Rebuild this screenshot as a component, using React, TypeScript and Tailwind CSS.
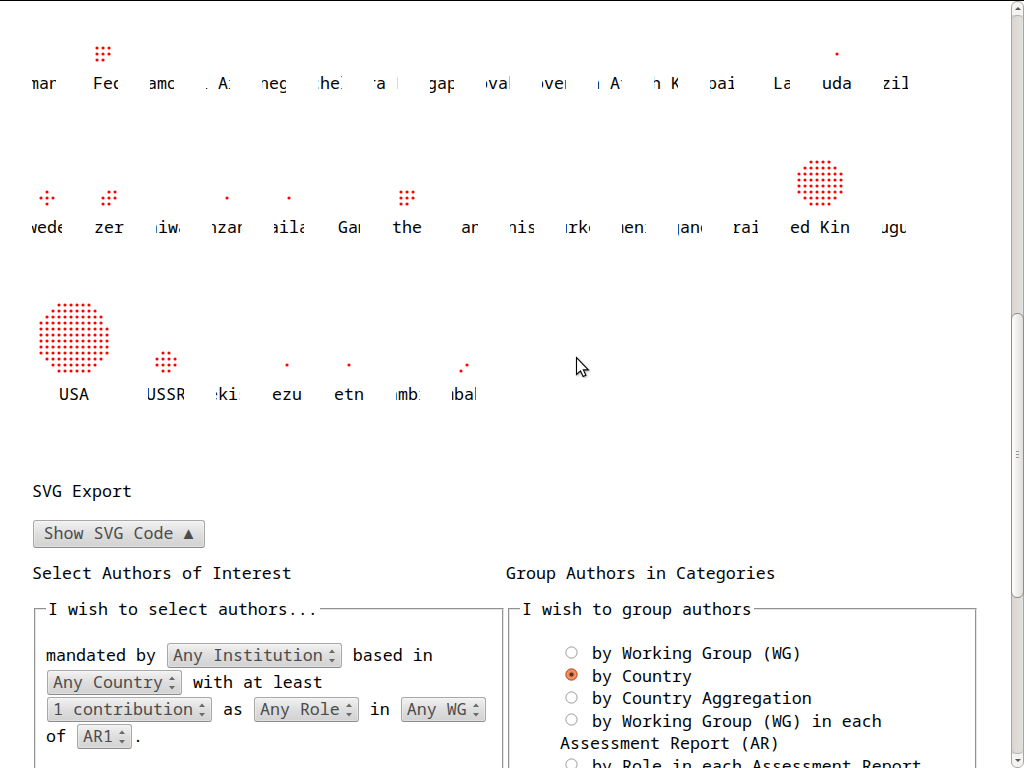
import type { ReactNode } from "react";

type Span = [number, number];
type Country = { name: string; rows?: Span[] };

const one: Span[] = [[0, -1], [1, 1], [0, -1]];
const eight: Span[] = [[0, 2], [0, 2], [0, 1]];

const firstRow: Country[] = [
  { name: "Romania" },
  { name: "Russian Federation", rows: eight },
  { name: "Samoa" },
  { name: "Saudi Arabia" },
  { name: "Senegal" },
  { name: "Seychelles" },
  { name: "Sierra Leone" },
  { name: "Singapore" },
  { name: "Slovakia" },
  { name: "Slovenia" },
  { name: "South Africa" },
  { name: "South Korea" },
  { name: "Spain" },
  { name: "Sri Lanka" },
  { name: "Sudan", rows: one },
  { name: "Swaziland" },
];

const secondRow: Country[] = [
  { name: "Sweden", rows: [[1, 1], [0, 2], [1, 1]] },
  { name: "Switzerland", rows: [[1, 2], [0, 2], [0, 1]] },
  { name: "Taiwan" },
  { name: "Tanzania", rows: one },
  { name: "Thailand", rows: one },
  { name: "The Gambia" },
  { name: "The Netherlands", rows: eight },
  { name: "Trinidad and Tobago" },
  { name: "Tunisia" },
  { name: "Turkey" },
  { name: "Turkmenistan" },
  { name: "Uganda" },
  { name: "Ukraine" },
  { name: "United Kingdom", rows: [[2, 5], [1, 6], [0, 7], [0, 7], [0, 7], [0, 7], [1, 6], [2, 5]] },
  { name: "Uruguay" },
];

const thirdRow: Country[] = [
  {
    name: "USA",
    rows: [[3, 8], [2, 9], [1, 10], [0, 10], [0, 11], [0, 11], [0, 11], [0, 11], [0, 11], [1, 10], [2, 9], [3, 8]],
  },
  { name: "USSR", rows: [[1, 2], [0, 3], [0, 3], [1, 2]] },
  { name: "Uzbekistan" },
  { name: "Venezuela", rows: one },
  { name: "Vietnam", rows: one },
  { name: "Zambia" },
  { name: "Zimbabwe", rows: [[1, 1], [0, 0]] },
];

function Cell({ name, rows = [] }: Country) {
  const width = Math.max(rows.length, 2) * 6 + 12;
  return (
    <div className="flex shrink-0 flex-col overflow-hidden" style={{ width }}>
      <svg width={width} height={rows.length * 6} className="mb-2 block" fill="#f00">
        {rows.flatMap(([from, to], r) =>
          Array.from({ length: to - from + 1 }, (_, i) => (
            <circle key={`${r}-${i}`} cx={9 + (from + i) * 6} cy={3 + r * 6} r={1.55} />
          )),
        )}
      </svg>
      <div className="flex h-6 justify-center leading-6 whitespace-nowrap">
        <span className="shrink-0">{name}</span>
      </div>
    </div>
  );
}

function Row({ items, className }: { items: Country[]; className: string }) {
  return (
    <div className={`flex items-end gap-8 pl-8 ${className}`}>
      {items.map((c) => (
        <Cell key={c.name} {...c} />
      ))}
    </div>
  );
}

const face =
  "rounded-[3px] border border-[#a8a8a8] border-b-[#8c8c8c] bg-linear-to-b from-[#f2f2f2] via-[#dedede] to-[#d2d2d2] text-[#4c4c4c] shadow-[inset_0_0_0_1px_rgba(255,255,255,0.3)]";

function Select({ children }: { children: ReactNode }) {
  return (
    <span className={`mx-px mt-px flex h-[25px] items-center justify-between pr-[6px] pl-[5px] ${face}`}>
      <span className="pb-[2px] leading-[22px]">{children}</span>
      <svg width="6" height="14" viewBox="0 0 6 14" className="mt-px ml-[6px]" fill="#6a6a6a">
        <path d="M0 4 3 0.5 6 4zM0 10h6L3 13.5z" />
      </svg>
    </span>
  );
}

function Line({ children }: { children: ReactNode }) {
  return <div className="flex h-[27px] items-start leading-[25px] whitespace-pre">{children}</div>;
}

function Radio({ checked }: { checked?: boolean }) {
  return (
    <svg width="13" height="13" viewBox="0 0 13 13" className="mr-[4px] ml-[5px] inline-block align-[0.5px]">
      {checked ? (
        <>
          <circle cx="6.5" cy="6.5" r="5.7" fill="#f07d50" stroke="#b4532f" />
          <circle cx="6.5" cy="6.5" r="4" fill="none" stroke="#f7a07c" />
          <circle cx="6.5" cy="6.5" r="2" fill="#5c3022" />
        </>
      ) : (
        <circle cx="6.5" cy="6.5" r="5.6" fill="#fff" stroke="#999" />
      )}
    </svg>
  );
}

function Fieldset({ legend, className, children }: { legend: string; className: string; children: ReactNode }) {
  return (
    <fieldset className={`h-[200px] border-2 border-[#e5e5e5] [border-style:groove] ${className}`}>
      <legend className="ml-[10px] px-[2px] leading-6">{legend}</legend>
      {children}
    </fieldset>
  );
}

function Scrollbar() {
  return (
    <div className="flex w-[13px] shrink-0 flex-col rounded-[6px] border border-[#aaa5a1] bg-linear-to-r from-[#d9d5d2] to-[#e2e0de]">
      <div className="flex h-[13px] items-center justify-center rounded-t-[6px] bg-[#f4f3f2]">
        <svg width="6" height="3" fill="#555">
          <path d="M0 3 3 0 6 3z" />
        </svg>
      </div>
      <div className="h-[298px] rounded-t-[5px] border-t border-[#b5b0ac]" />
      <div className="-mx-px flex h-[285px] flex-col items-center justify-center gap-[2px] rounded-[6px] border border-[#8f8b88] bg-linear-to-r from-[#fdfdfd] to-[#e0dedc] pb-[3px]">
        <div className="h-px w-[3px] bg-[#999]" />
        <div className="h-px w-[3px] bg-[#999]" />
        <div className="h-px w-[3px] bg-[#999]" />
      </div>
      <div className="grow rounded-b-[5px] border-b border-[#b5b0ac]" />
      <div className="flex h-[13px] items-center justify-center rounded-b-[6px] bg-[#f4f3f2]">
        <svg width="6" height="3" fill="#555">
          <path d="M0 0h6L3 3z" />
        </svg>
      </div>
    </div>
  );
}

export default function App() {
  return (
    <div className="relative flex h-[768px] w-[1024px] overflow-hidden border-t border-black bg-white font-['Noto_Sans_Mono','DejaVu_Sans_Mono',monospace] text-[16.6667px] text-black">
      <main className="h-[767px] w-[1011px] shrink-0 overflow-hidden">
        <Row items={firstRow} className="h-[94px]" />
        <Row items={secondRow} className="h-[144px]" />
        <Row items={thirdRow} className="h-[167px]" />

        <h2 className="mt-[73px] ml-8 leading-6">SVG Export</h2>
        <button className={`mt-[17px] ml-[33px] block h-7 w-[172px] pr-px pb-[2px] text-center leading-6 whitespace-nowrap ${face}`}>
          Show SVG Code ▲
        </button>

        <div className="mt-[13px] flex pl-8">
          <section className="w-[474px]">
            <h2 className="leading-6">Select Authors of Interest</h2>
            <Fieldset legend="I wish to select authors..." className="mt-3 ml-[2px] w-[470px]">
              <div className="mt-[21px] pl-[10px]">
                <Line>
                  {"mandated by "}
                  <Select>Any Institution</Select>
                  {" based in"}
                </Line>
                <Line>
                  <Select>Any Country</Select>
                  {" with at least"}
                </Line>
                <Line>
                  <Select>1 contribution</Select>
                  {" as "}
                  <Select>Any Role</Select>
                  {" in "}
                  <Select>Any WG</Select>
                </Line>
                <Line>
                  {"of "}
                  <Select>AR1</Select>.
                </Line>
              </div>
            </Fieldset>
          </section>
          <section className="w-[474px]">
            <h2 className="leading-6">Group Authors in Categories</h2>
            <Fieldset legend="I wish to group authors" className="mt-3 ml-[2px] w-[469px]">
              <div className="mt-[21px] w-[380px] pl-[50px] leading-[22.6px] whitespace-nowrap">
                <div><Radio /> by Working Group (WG)</div>
                <div><Radio checked /> by Country</div>
                <div><Radio /> by Country Aggregation</div>
                <div>
                  <Radio /> by Working Group (WG) in each
                  <br />
                  Assessment Report (AR)
                </div>
                <div><Radio /> by Role in each Assessment Report</div>
              </div>
            </Fieldset>
          </section>
        </div>
      </main>
      <Scrollbar />

      <svg width="16" height="24" viewBox="0 0 16 24" className="absolute top-[355px] left-[575px] drop-shadow-[1px_1px_1px_rgba(0,0,0,0.3)]">
        <path
          d="M1.5 1.5v17l4-3.6 2.6 5.6 2.8-1.3-2.5-5.3h5z"
          fill="#fff"
          stroke="#000"
          strokeWidth="1.1"
        />
      </svg>
    </div>
  );
}
